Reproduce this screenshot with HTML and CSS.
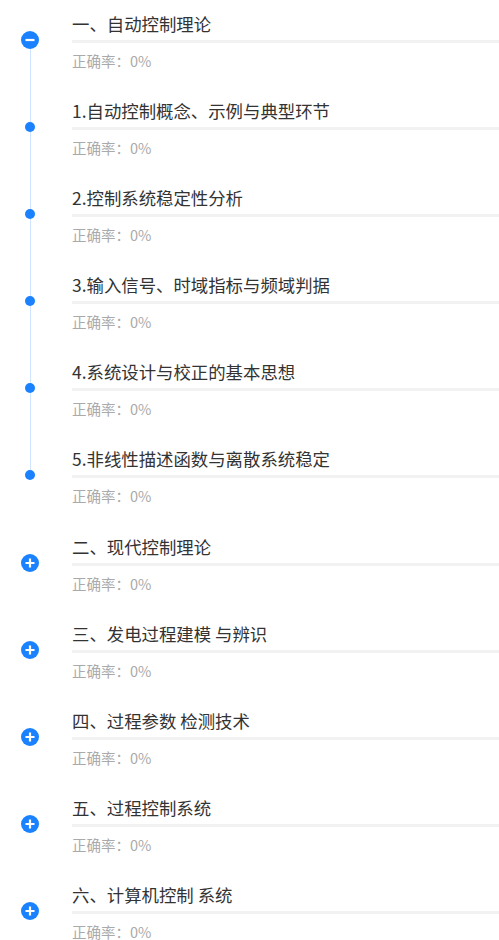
FILE: index.html
```html
<!DOCTYPE html>
<html lang="zh-CN">
  <head>
    <meta charset="UTF-8" />
    <meta name="viewport" content="width=device-width, initial-scale=1.0" />
    <title>章节练习</title>
    <link rel="stylesheet" href="styles.css">
  </head>
  <body>
    <ul class="chapters">
      <!-- expanded chapter -->
      <li class="item">
        <div class="marker">
          <span class="seg seg-top"></span>
          <svg class="icon" width="18" height="18" viewBox="0 0 18 18">
            <circle cx="9" cy="9" r="9" fill="#1a82ff" />
            <path d="M4.5 9h9" stroke="#fff" stroke-width="2.2" />
          </svg>
          <span class="seg seg-bottom line"></span>
        </div>
        <div class="content">
          <div class="title">一、自动控制理论</div>
          <div class="bar"></div>
          <div class="rate">正确率：0%</div>
        </div>
      </li>
      <li class="item">
        <div class="marker">
          <span class="seg seg-top line"></span>
          <span class="dot"></span>
          <span class="seg seg-bottom line"></span>
        </div>
        <div class="content">
          <div class="title">1.自动控制概念、示例与典型环节</div>
          <div class="bar"></div>
          <div class="rate">正确率：0%</div>
        </div>
      </li>
      <li class="item">
        <div class="marker">
          <span class="seg seg-top line"></span>
          <span class="dot"></span>
          <span class="seg seg-bottom line"></span>
        </div>
        <div class="content">
          <div class="title">2.控制系统稳定性分析</div>
          <div class="bar"></div>
          <div class="rate">正确率：0%</div>
        </div>
      </li>
      <li class="item">
        <div class="marker">
          <span class="seg seg-top line"></span>
          <span class="dot"></span>
          <span class="seg seg-bottom line"></span>
        </div>
        <div class="content">
          <div class="title">3.输入信号、时域指标与频域判据</div>
          <div class="bar"></div>
          <div class="rate">正确率：0%</div>
        </div>
      </li>
      <li class="item">
        <div class="marker">
          <span class="seg seg-top line"></span>
          <span class="dot"></span>
          <span class="seg seg-bottom line"></span>
        </div>
        <div class="content">
          <div class="title">4.系统设计与校正的基本思想</div>
          <div class="bar"></div>
          <div class="rate">正确率：0%</div>
        </div>
      </li>
      <li class="item">
        <div class="marker">
          <span class="seg seg-top line"></span>
          <span class="dot"></span>
          <span class="seg seg-bottom"></span>
        </div>
        <div class="content">
          <div class="title">5.非线性描述函数与离散系统稳定</div>
          <div class="bar"></div>
          <div class="rate">正确率：0%</div>
        </div>
      </li>

      <!-- collapsed chapters -->
      <li class="item">
        <div class="marker">
          <span class="seg seg-top"></span>
          <svg class="icon" width="18" height="18" viewBox="0 0 18 18">
            <circle cx="9" cy="9" r="9" fill="#1a82ff" />
            <path d="M4.5 9h9M9 4.5v9" stroke="#fff" stroke-width="2.2" />
          </svg>
          <span class="seg seg-bottom"></span>
        </div>
        <div class="content">
          <div class="title">二、现代控制理论</div>
          <div class="bar"></div>
          <div class="rate">正确率：0%</div>
        </div>
      </li>
      <li class="item">
        <div class="marker">
          <span class="seg seg-top"></span>
          <svg class="icon" width="18" height="18" viewBox="0 0 18 18">
            <circle cx="9" cy="9" r="9" fill="#1a82ff" />
            <path d="M4.5 9h9M9 4.5v9" stroke="#fff" stroke-width="2.2" />
          </svg>
          <span class="seg seg-bottom"></span>
        </div>
        <div class="content">
          <div class="title">三、发电过程建模 与辨识</div>
          <div class="bar"></div>
          <div class="rate">正确率：0%</div>
        </div>
      </li>
      <li class="item">
        <div class="marker">
          <span class="seg seg-top"></span>
          <svg class="icon" width="18" height="18" viewBox="0 0 18 18">
            <circle cx="9" cy="9" r="9" fill="#1a82ff" />
            <path d="M4.5 9h9M9 4.5v9" stroke="#fff" stroke-width="2.2" />
          </svg>
          <span class="seg seg-bottom"></span>
        </div>
        <div class="content">
          <div class="title">四、过程参数 检测技术</div>
          <div class="bar"></div>
          <div class="rate">正确率：0%</div>
        </div>
      </li>
      <li class="item">
        <div class="marker">
          <span class="seg seg-top"></span>
          <svg class="icon" width="18" height="18" viewBox="0 0 18 18">
            <circle cx="9" cy="9" r="9" fill="#1a82ff" />
            <path d="M4.5 9h9M9 4.5v9" stroke="#fff" stroke-width="2.2" />
          </svg>
          <span class="seg seg-bottom"></span>
        </div>
        <div class="content">
          <div class="title">五、过程控制系统</div>
          <div class="bar"></div>
          <div class="rate">正确率：0%</div>
        </div>
      </li>
      <li class="item">
        <div class="marker">
          <span class="seg seg-top"></span>
          <svg class="icon" width="18" height="18" viewBox="0 0 18 18">
            <circle cx="9" cy="9" r="9" fill="#1a82ff" />
            <path d="M4.5 9h9M9 4.5v9" stroke="#fff" stroke-width="2.2" />
          </svg>
          <span class="seg seg-bottom"></span>
        </div>
        <div class="content">
          <div class="title">六、计算机控制 系统</div>
          <div class="bar"></div>
          <div class="rate">正确率：0%</div>
        </div>
      </li>
    </ul>
  </body>
</html>
```

FILE: styles.css
```css
body {
  margin: 0;
  background-color: #fff;
  font-family: "Noto Sans CJK SC", "Noto Sans", sans-serif;
}

.chapters {
  list-style: none;
  margin: 0;
  padding: 0;
}

.item {
  display: flex;
  height: 87.1px;
}

/* left column with the timeline, marker centre sits at 40px */
.marker {
  width: 60px;
  flex-shrink: 0;
  display: flex;
  flex-direction: column;
  align-items: center;
}

.seg {
  width: 1px;
  flex-shrink: 0;
}

.seg-top {
  height: 31px;
}

.seg-top:has(+ .dot) {
  height: 35px;
}

.seg-bottom {
  flex: 1;
}

.line {
  background-color: #cfe4ff;
}

.icon {
  display: block;
  flex-shrink: 0;
}

.dot {
  width: 10px;
  height: 10px;
  border-radius: 50%;
  background-color: #1a82ff;
  flex-shrink: 0;
}

.content {
  flex: 1;
  margin-left: 12px;
  padding-top: 13px;
}

.title {
  font-size: 17.4px;
  line-height: 22px;
  color: #333;
  white-space: nowrap;
}

.bar {
  height: 3px;
  margin-top: 5px;
  background-color: #f2f2f2;
}

.rate {
  margin-top: 10px;
  font-size: 14.5px;
  line-height: 16px;
  color: #aaa;
}
```
